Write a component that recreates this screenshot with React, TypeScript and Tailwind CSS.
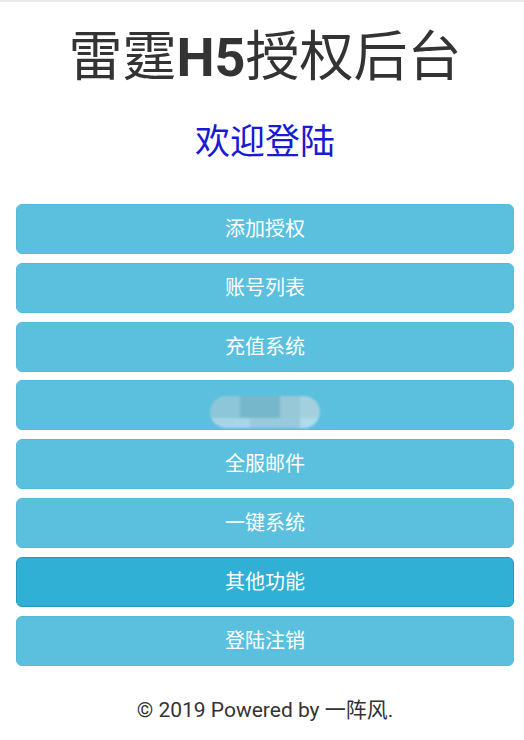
import React from "react";

const items = ["添加授权", "账号列表", "充值系统", "", "全服邮件", "一键系统", "其他功能", "登陆注销"];

export default function App() {
  return (
    <div
      className="w-[524px] h-[740px] bg-white border-t-2 border-[#e9e9e9] flex flex-col"
      style={{ fontFamily: 'Roboto, "Noto Sans CJK SC", sans-serif' }}
    >
      <h1 className="mt-[2px] h-[108px] flex items-center justify-center pl-4 pr-[10px] text-[54px] leading-none text-[#333] font-normal">
        <span>雷霆</span>
        <span className="font-bold">H5</span>
        <span>授权后台</span>
      </h1>
      <h2 className="h-[60px] flex items-center justify-center pl-4 pr-[10px] text-[35px] leading-none text-[#1a1ad0] font-normal">
        欢迎登陆
      </h2>
      <div className="mt-[32px] pl-4 pr-[10px] flex flex-col gap-[8.8px]">
        {items.map((t, i) => (
          <div
            key={i}
            className={
              "h-[50px] rounded-[6px] border flex items-center justify-center text-[20px] text-white " +
              (i === 6 ? "bg-[#31b0d5] border-[#269abc]" : "bg-[#5bc0de] border-[#52bbdb]")
            }
          >
            {t ? (
              t
            ) : (
              <div className="translate-y-[7px] flex flex-col w-[110px] h-[32px] rounded-full overflow-hidden blur-[1px]">
                <div className="flex h-[22px]">
                  <div className="w-[30px] bg-[#8cc6d8]" />
                  <div className="w-[40px] bg-[#77b7cb]" />
                  <div className="w-[20px] bg-[#96c8d8]" />
                  <div className="w-[20px] bg-[#a2d0de]" />
                </div>
                <div className="flex h-[10px]">
                  <div className="w-[40px] bg-[#a6d6e6]" />
                  <div className="w-[50px] bg-[#98cadb]" />
                  <div className="w-[20px] bg-[#b0dbe9]" />
                </div>
              </div>
            )}
          </div>
        ))}
      </div>
      <div className="mt-[31px] h-[28px] flex items-center justify-center pl-4 pr-[10px] text-[21px] text-[#333]">
        © 2019 Powered by 一阵风.
      </div>
    </div>
  );
}
